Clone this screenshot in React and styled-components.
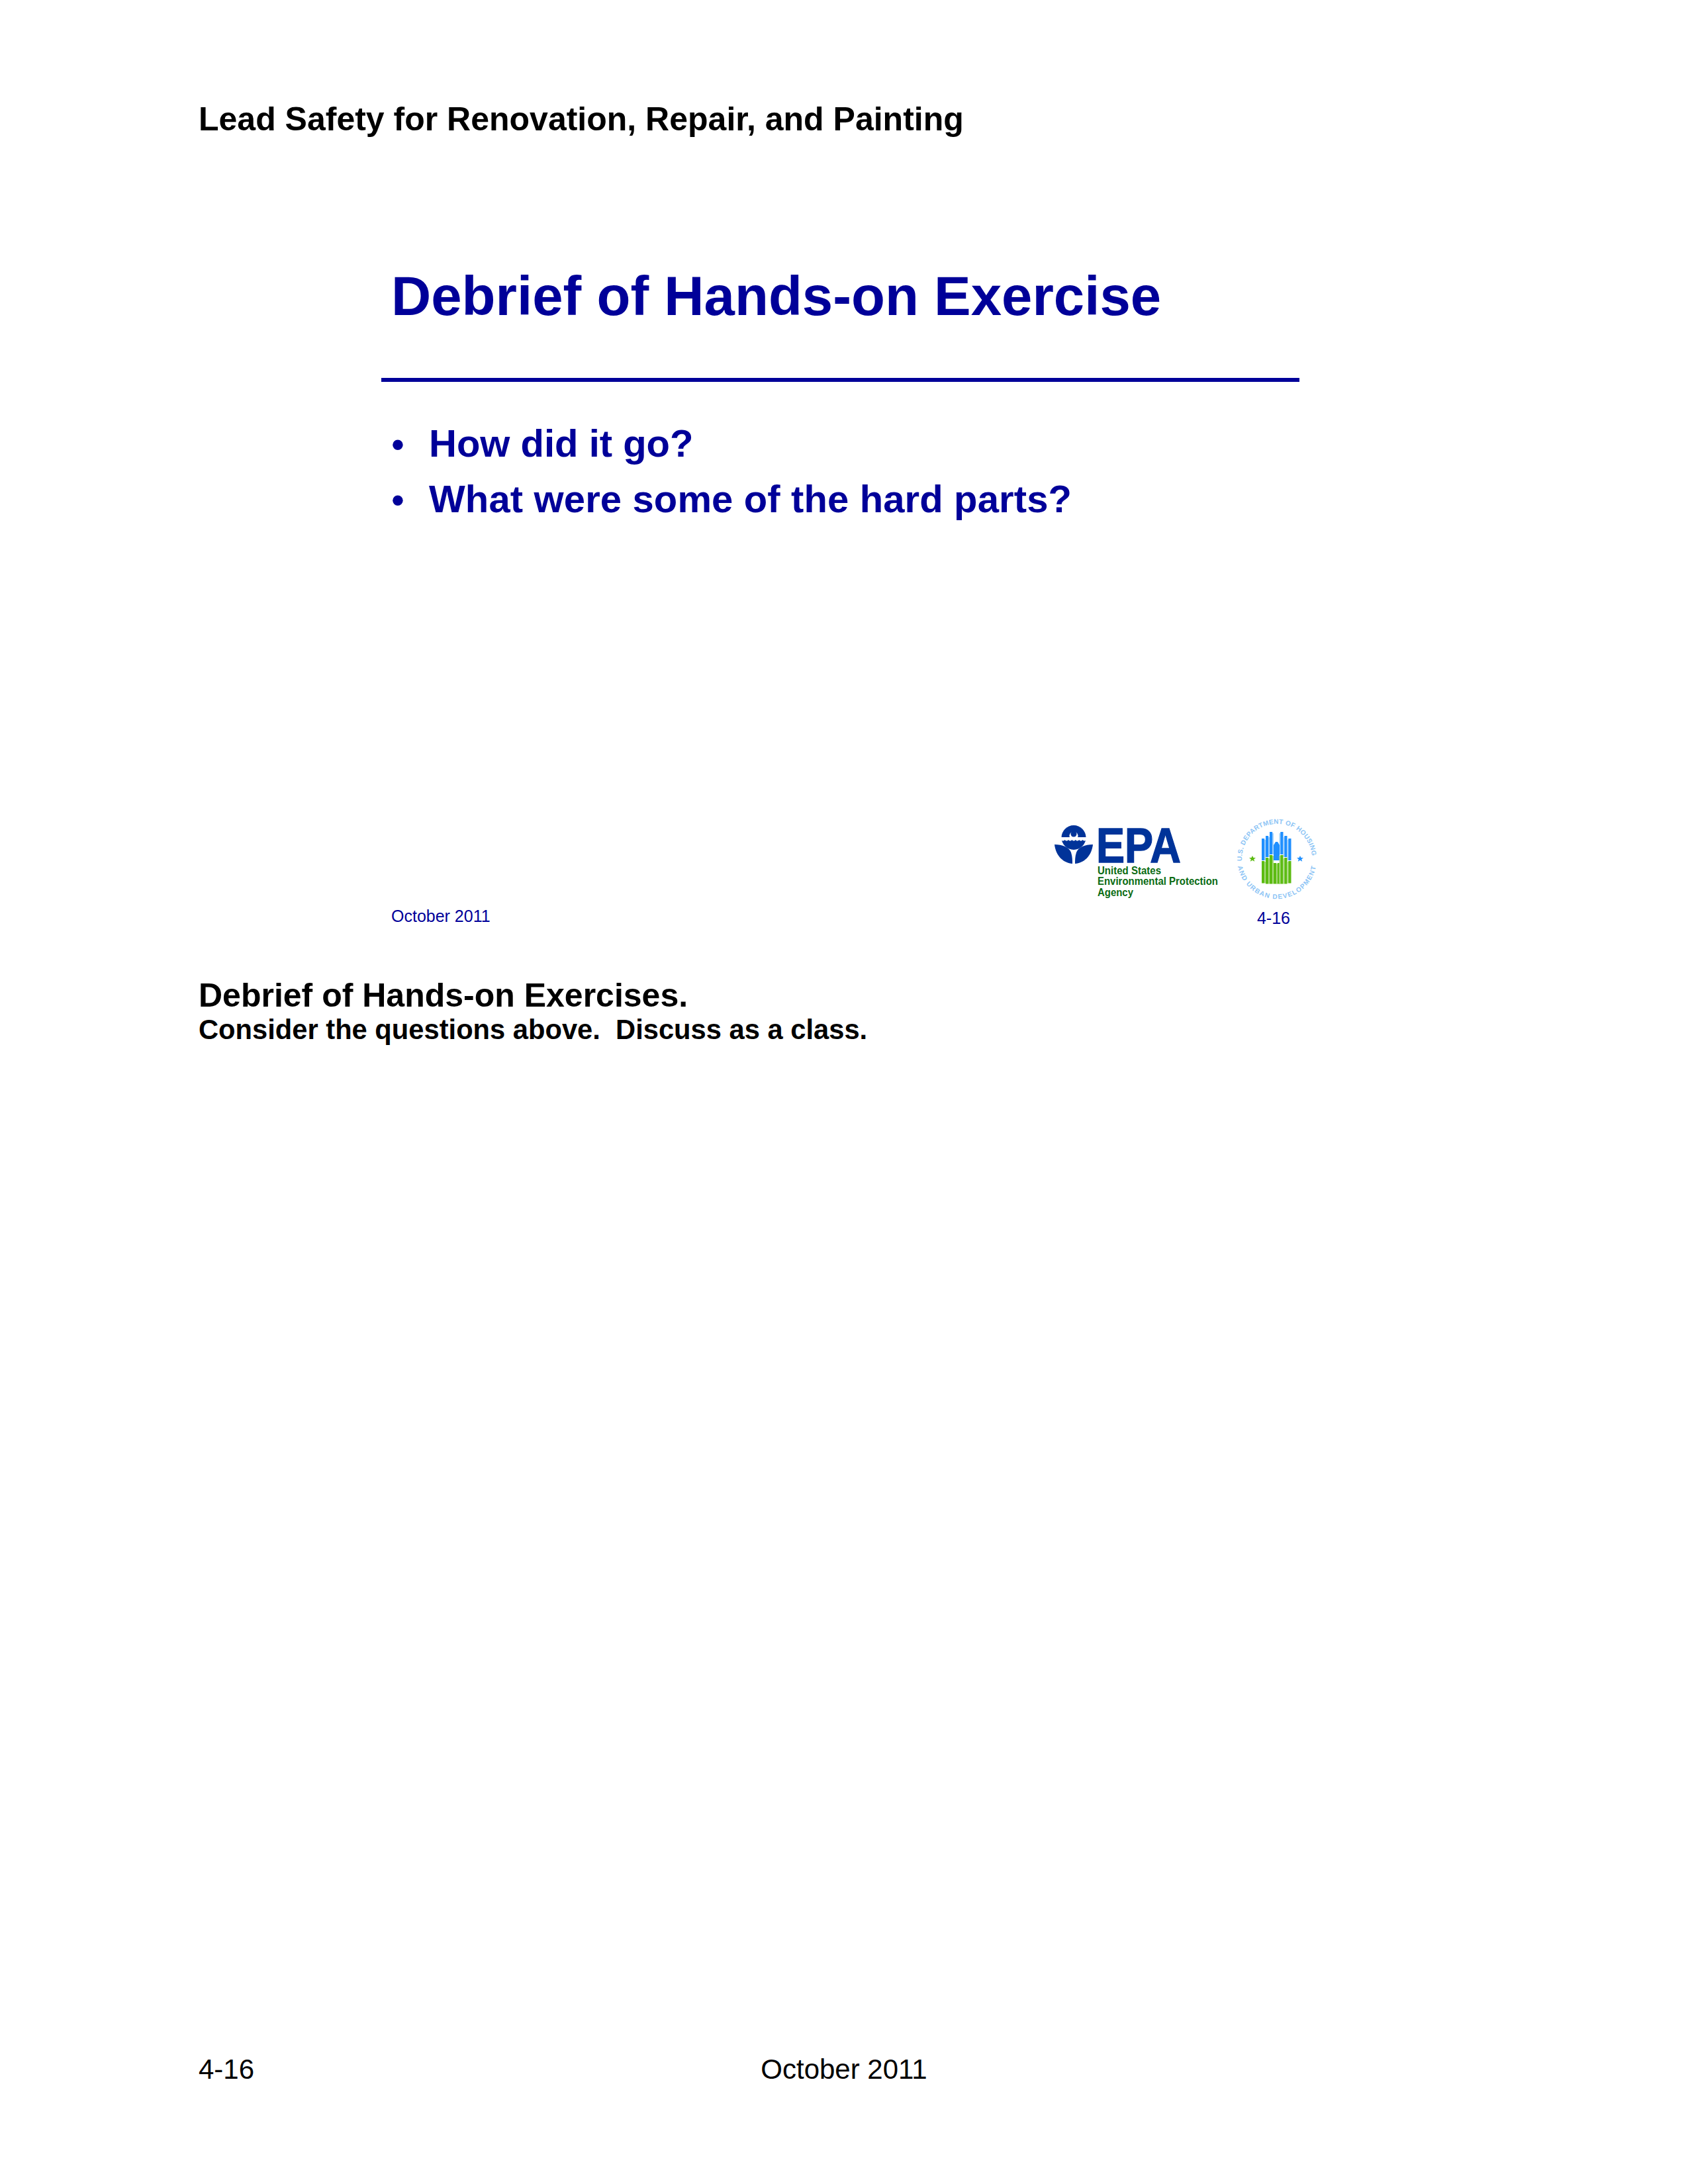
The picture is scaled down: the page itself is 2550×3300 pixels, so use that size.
import React from 'react';
import styled, { createGlobalStyle } from 'styled-components';

const GlobalStyle = createGlobalStyle`
  html, body {
    margin: 0;
    padding: 0;
    background: #ffffff;
    font-family: "Liberation Sans", Arial, sans-serif;
  }
`;

const Page = styled.div`
  box-sizing: border-box;
  display: flex;
  flex-direction: column;
  height: 3300px;
  padding: 152px 300px 0;
  width: 2550px;
`;

const Header = styled.div`
  color: #000000;
  font-size: 50px;
  font-weight: bold;
  line-height: 56px;
`;

const Slide = styled.div`
  display: flex;
  flex-direction: column;
  height: 1194px;
  margin-left: 276px;
  width: 1418px;
`;

const SlideTitle = styled.h1`
  color: #000099;
  font-size: 83.4px;
  font-weight: bold;
  line-height: 100px;
  margin: 190px 0 0 15px;
`;

const Rule = styled.div`
  background: #000099;
  height: 6px;
  margin-top: 73px;
  width: 1387px;
`;

const Bullets = styled.ul`
  list-style: none;
  margin: 51px 0 0 15px;
  padding: 0;
`;

const Bullet = styled.li`
  align-items: baseline;
  color: #000099;
  display: flex;
  font-size: 58px;
  font-weight: bold;
  gap: 37px;
  letter-spacing: ${(props) => props.$spacing || 0}px;
  line-height: 84px;
`;

const BulletDot = styled.span`
  flex: 0 0 20px;
  font-size: 54px;
  line-height: 1;
  text-align: center;
`;

const SlideFooter = styled.div`
  align-items: flex-end;
  display: flex;
  justify-content: space-between;
  margin-top: auto;
`;

const SlideDate = styled.span`
  color: #000099;
  font-size: 25px;
  line-height: 30px;
  margin: 0 0 3px 15px;
`;

const Logos = styled.div`
  align-items: flex-start;
  display: flex;
  gap: 22px;
`;

const EpaMark = styled.svg`
  margin-top: 9px;
`;

const HudColumn = styled.div`
  align-items: center;
  display: flex;
  flex-direction: column;
  gap: 9px;
`;

const SlideNumber = styled.span`
  color: #000099;
  font-size: 25px;
  line-height: 30px;
  padding-right: 10px;
`;

const Notes = styled.div`
  color: #000000;
  font-weight: bold;
  margin-top: 74px;
`;

const NotesTitle = styled.div`
  font-size: 50px;
  line-height: 56px;
`;

const NotesBody = styled.div`
  font-size: 41.7px;
  line-height: 48px;
  white-space: pre-wrap;
`;

const PageFooter = styled.div`
  color: #000000;
  display: grid;
  font-size: 42px;
  grid-template-columns: 1fr auto 1fr;
  line-height: 48px;
  margin-top: auto;
  padding-bottom: 149px;
`;

const EpaLogo = () => (
  <EpaMark width="255" height="120" viewBox="0 0 255 120">
    <g fill="#003399">
      <circle cx="35" cy="23.500" r="18.500" />
      <path d="M6 34C18 34 28 38 31 46C33 52 33 58 33 63C20 62 8 52 6 34z" />
      <path d="M64 34C52 34 42 38 39 46C37 52 37 58 37 63C50 62 62 52 64 34z" />
    </g>
    <path
      fill="#ffffff"
      d="M16 23h38v4c-1.800 2-3.700 2-5.400 0-1.800 2-3.700 2-5.400 0-1.800 2-3.700 2-5.400 0-1.800 2-3.700 2-5.400 0-1.800 2-3.700 2-5.400 0-1.800 2-3.700 2-5.400 0-1.800 2-3.700 2-5.600 0z"
    />
    <path fill="#ffffff" d="M29 23.500a6.500 6.500 0 1 1 12 0z" />
    <circle cx="35" cy="18" r="4.500" fill="#003399" />
    <text
      x="69"
      y="61"
      fill="#003399"
      stroke="#003399"
      strokeWidth="1.400"
      fontFamily="Liberation Sans, sans-serif"
      fontSize="75"
      fontWeight="bold"
      textLength="128"
      lengthAdjust="spacingAndGlyphs"
    >
      EPA
    </text>
    <g fill="#0a6b12" fontFamily="Liberation Sans, sans-serif" fontSize="17" fontWeight="bold">
      <text x="71" y="79" textLength="96" lengthAdjust="spacingAndGlyphs">United States</text>
      <text x="71" y="95" textLength="182" lengthAdjust="spacingAndGlyphs">Environmental Protection</text>
      <text x="71" y="112" textLength="54" lengthAdjust="spacingAndGlyphs">Agency</text>
    </g>
  </EpaMark>
);

const blueBars = [
  { x: 64, top: 47, bottom: 80 },
  { x: 70, top: 43, bottom: 75 },
  { x: 76, top: 37, bottom: 71 },
  { x: 92.300, top: 37, bottom: 71 },
  { x: 98.300, top: 43, bottom: 75 },
  { x: 104.300, top: 47, bottom: 80 },
];

const greenBars = [
  { x: 64, top: 81, bottom: 114.500 },
  { x: 70, top: 76, bottom: 115.500 },
  { x: 76, top: 72, bottom: 115.500 },
  { x: 82, top: 84, bottom: 115.500 },
  { x: 87.800, top: 84, bottom: 115.500 },
  { x: 92.300, top: 72, bottom: 115.500 },
  { x: 98.300, top: 76, bottom: 115.500 },
  { x: 104.300, top: 81, bottom: 114.500 },
];

// light stripe sits on the inner side of each bar, mirrored around the centre
const stripeX = (bar) => (bar.x < 87 ? bar.x + 4.200 : bar.x - 1.800);

const HudLogo = () => (
  <svg width="130" height="130" viewBox="-65 -65 130 130">
    <defs>
      <path id="hud-top" d="M-52.900 3A53 53 0 1 1 52.900 3" />
      <path id="hud-bottom" d="M-59 11A60 60 0 0 0 59.800 5" />
    </defs>
    <g fill="#8cc4f5" fontFamily="Liberation Sans, sans-serif" fontSize="10" fontWeight="bold">
      <text letterSpacing="0.3">
        <textPath href="#hud-top">U.S. DEPARTMENT OF HOUSING</textPath>
      </text>
      <text letterSpacing="1.300">
        <textPath href="#hud-bottom">AND URBAN DEVELOPMENT</textPath>
      </text>
    </g>
    <g transform="translate(-87 -78)">
      {blueBars.map((bar) => (
        <g key={bar.x}>
          <rect x={stripeX(bar)} y={bar.top + 2} width="1.800" height={bar.bottom - bar.top - 2} fill="#a6d3fb" />
          <rect x={bar.x} y={bar.top} width="4.200" height={bar.bottom - bar.top} fill="#1f8fff" />
        </g>
      ))}
      <path fill="#1f8fff" d="M82 80V57l3-5h3l3 5v23z" />
      {greenBars.map((bar) => (
        <g key={bar.x}>
          <rect x={stripeX(bar)} y={bar.top + 1} width="1.800" height={bar.bottom - bar.top - 1} fill="#addb85" />
          <rect x={bar.x} y={bar.top} width="4.200" height={bar.bottom - bar.top} fill="#5cbb12" />
        </g>
      ))}
      <path fill="#5cbb12" d="M50 73l1.500 3h3.500l-2.800 2.300 1 3.500-3.200-2.100-3.200 2.100 1-3.500-2.800-2.300h3.500z" />
      <path fill="#1f8fff" d="M122 73l1.500 3h3.500l-2.800 2.300 1 3.500-3.200-2.100-3.200 2.100 1-3.500-2.800-2.300h3.500z" />
    </g>
  </svg>
);

const App = () => (
  <Page>
    <GlobalStyle />
    <Header>Lead Safety for Renovation, Repair, and Painting</Header>
    <Slide>
      <SlideTitle>Debrief of Hands-on Exercise</SlideTitle>
      <Rule />
      <Bullets>
        <Bullet><BulletDot>•</BulletDot><span>How did it go?</span></Bullet>
        <Bullet $spacing={0.13}><BulletDot>•</BulletDot><span>What were some of the hard parts?</span></Bullet>
      </Bullets>
      <SlideFooter>
        <SlideDate>October 2011</SlideDate>
        <Logos>
          <EpaLogo />
          <HudColumn>
            <HudLogo />
            <SlideNumber>4-16</SlideNumber>
          </HudColumn>
        </Logos>
      </SlideFooter>
    </Slide>
    <Notes>
      <NotesTitle>Debrief of Hands-on Exercises.</NotesTitle>
      <NotesBody>Consider the questions above.  Discuss as a class.</NotesBody>
    </Notes>
    <PageFooter>
      <span>4-16</span>
      <span>October 2011</span>
    </PageFooter>
  </Page>
);

export default App;
